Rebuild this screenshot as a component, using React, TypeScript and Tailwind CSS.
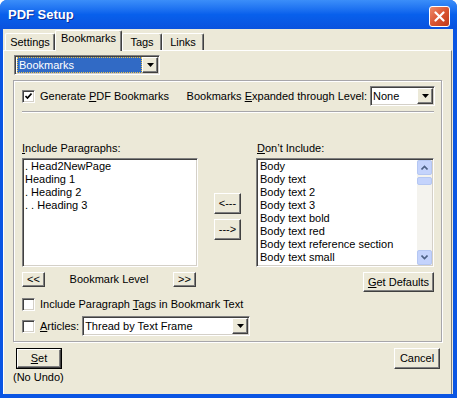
const raised =
  "bg-[#ECE9D8] border border-t-white border-l-white border-r-[#404040] border-b-[#404040] shadow-[inset_-1px_-1px_0_#808080]";
const sunken =
  "border border-t-[#808080] border-l-[#808080] border-r-white border-b-white shadow-[inset_1px_1px_0_#404040,inset_-1px_-1px_0_#D4D0C8]";

const Btn = ({ className = "", children }: { className?: string; children: React.ReactNode }) => (
  <div className={`${raised} flex items-center justify-center ${className}`}>{children}</div>
);

const U = ({ children }: { children: React.ReactNode }) => <span className="underline underline-offset-[1px]">{children}</span>;

const ArrowBtn = () => (
  <div className={`${raised} w-[16px] h-full flex items-center justify-center shrink-0`}>
    <svg width="7" height="4" viewBox="0 0 7 4">
      <path d="M0 0h7L3.5 4z" fill="#000" />
    </svg>
  </div>
);

const Combo = ({ text, className = "", selected = false }: { text: string; className?: string; selected?: boolean }) => (
  <div className={`${sunken} bg-white flex p-[1px] ${className}`}>
    <div className="flex-1 flex items-center pl-[1px] min-w-0">
      {selected ? (
        <div className="w-full h-[16px] bg-[#316AC5] text-white border border-dotted border-[#E8C34A] flex items-center pl-[1px]">
          {text}
        </div>
      ) : (
        <span>{text}</span>
      )}
    </div>
    <ArrowBtn />
  </div>
);

const Check = ({ checked = false }: { checked?: boolean }) => (
  <div className={`${sunken} bg-white w-[13px] h-[13px] shrink-0 flex items-center justify-center`}>
    {checked && (
      <svg width="7" height="7" viewBox="0 0 7 7">
        <path d="M0.5 3l2 2 4-4.5" stroke="#000" strokeWidth="1.6" fill="none" />
      </svg>
    )}
  </div>
);

const Tab = ({ label, selected = false, w }: { label: string; selected?: boolean; w: string }) => (
  <div
    className={`${w} flex justify-center bg-[#ECE9D8] border-t border-l border-t-white border-l-white border-r border-r-[#404040] rounded-t-[2px] shadow-[inset_-1px_0_0_#808080] ${
      selected ? "h-[21px] -mb-[1px] z-10 pt-[1px]" : "h-[17px] items-center"
    }`}
  >
    {label}
  </div>
);

const ScrollBtn = ({ up }: { up: boolean }) => (
  <div className="h-[15px] w-[15px] bg-[#C4D3FC] border border-[#B5C7F2] rounded-[2px] flex items-center justify-center">
    <svg width="7" height="5" viewBox="0 0 7 5">
      <path d={up ? "M0.5 4.5L3.5 1.5L6.5 4.5" : "M0.5 0.5L3.5 3.5L6.5 0.5"} stroke="#4D6185" strokeWidth="1.6" fill="none" />
    </svg>
  </div>
);

const include = [". Head2NewPage", "Heading 1", ". Heading 2", ". . Heading 3"];
const exclude = [
  "Body",
  "Body text",
  "Body text 2",
  "Body text 3",
  "Body text bold",
  "Body text red",
  "Body text reference section",
  "Body text small",
];

const App = () => {
  return (
    <div className="w-[457px] h-[398px] bg-white font-['Liberation_Sans',Arial,sans-serif] text-[11px] leading-[13px] text-black">
      <div className="w-full h-full rounded-t-[7px] overflow-hidden bg-[#0A55E3] flex flex-col">
        {/* title bar */}
        <div className="h-[29px] shrink-0 bg-linear-to-b from-[#3B8EF9] via-[#0860EC] to-[#0A52DE] flex items-center justify-between pl-[8px] pr-[7px]">
          <span className="text-white font-bold text-[13px] [text-shadow:1px_1px_#0C2D9A]">PDF Setup</span>
          <div className="w-[21px] h-[21px] mt-[3px] rounded-[3px] border border-white bg-linear-to-br from-[#EE8A6A] via-[#DA5532] to-[#C13A18] flex items-center justify-center">
            <svg width="11" height="11" viewBox="0 0 11 11">
              <path d="M1.5 1.5l8 8M9.5 1.5l-8 8" stroke="#fff" strokeWidth="2.2" strokeLinecap="round" />
            </svg>
          </div>
        </div>

        {/* body */}
        <div className="flex-1 ml-[3px] mr-[4px] mb-[4px] bg-[#ECE9D8] flex flex-col">
          <div className="h-[21px] flex items-end pl-[2px] shrink-0">
            <Tab label="Settings" w="w-[50px]" />
            <Tab label="Bookmarks" w="w-[67px]" selected />
            <Tab label="Tags" w="w-[40px]" />
            <Tab label="Links" w="w-[42px]" />
          </div>

          <div className="flex-1 mr-[1px] border-t border-l border-t-white border-l-white border-r border-r-[#808080] flex flex-col">
            <Combo text="Bookmarks" selected className="mt-[4px] ml-[10px] w-[146px] h-[20px]" />

            {/* group box */}
            <div className="mt-[5px] ml-[9px] w-[429px] h-[262px] border border-[#A7A6AA] shadow-[inset_1px_1px_0_#fff,1px_1px_0_#fff] flex flex-col">
              <div className="mt-[5px] h-[20px] pl-[8px] pr-[6px] flex items-center">
                <Check checked />
                <span className="ml-[5px]">
                  Generate <U>P</U>DF Bookmarks
                </span>
                <span className="ml-auto mr-[3px]">
                  Bookmarks <U>E</U>xpanded through Level:
                </span>
                <Combo text="None" className="w-[65px] h-[20px]" />
              </div>

              <div className="mt-[5px] ml-[8px] mr-[7px] h-[2px] border-t border-t-[#A7A6AA] border-b border-b-white" />

              <div className="mt-[29px] pl-[8px] flex">
                <div className="w-[176px] flex flex-col">
                  <span>
                    <U>I</U>nclude Paragraphs:
                  </span>
                  <div className={`${sunken} mt-[3px] h-[109px] bg-white px-[1px] pt-[1px]`}>
                    {include.map((t) => (
                      <div key={t} className="h-[13px] pl-[1px]">
                        {t}
                      </div>
                    ))}
                  </div>
                  <div className="mt-[5px] h-[15px] pr-[2px] flex items-center">
                    <Btn className="w-[23px] h-[15px]">&lt;&lt;</Btn>
                    <span className="flex-1 text-center">Bookmark Level</span>
                    <Btn className="w-[23px] h-[15px]">&gt;&gt;</Btn>
                  </div>
                </div>

                <div className="ml-[16px] w-[27px] pt-[51px] flex flex-col gap-[5px]">
                  <Btn className="h-[21px]">&lt;---</Btn>
                  <Btn className="h-[21px]">---&gt;</Btn>
                </div>

                <div className="ml-[15px] w-[178px] flex flex-col">
                  <span className="pl-[1px]">
                    <U>D</U>on’t Include:
                  </span>
                  <div className={`${sunken} mt-[3px] h-[109px] bg-white flex p-[1px]`}>
                    <div className="flex-1 pl-[2px]">
                      {exclude.map((t) => (
                        <div key={t} className="h-[13px]">
                          {t}
                        </div>
                      ))}
                    </div>
                    <div className="w-[15px] bg-[#F4F3EE] flex flex-col justify-between">
                      <div className="flex flex-col">
                        <ScrollBtn up />
                        <div className="mt-[2px] h-[8px] bg-[#C4D3FC] border border-[#B5C7F2] rounded-[2px]" />
                      </div>
                      <ScrollBtn up={false} />
                    </div>
                  </div>
                  <Btn className="mt-[5px] self-end w-[71px] h-[20px]">
                    <span>
                      <U>G</U>et Defaults
                    </span>
                  </Btn>
                </div>
              </div>

              <div className="mt-[6px] h-[13px] pl-[8px] flex items-center">
                <Check />
                <span className="ml-[5px]">
                  Include Paragraph <U>T</U>ags in Bookmark Text
                </span>
              </div>

              <div className="mt-[5px] h-[20px] pl-[8px] flex items-center">
                <Check />
                <span className="ml-[5px]">
                  <U>A</U>rticles:
                </span>
                <Combo text="Thread by Text Frame" className="ml-[3px] w-[168px] h-[20px]" />
              </div>
            </div>

            {/* bottom buttons */}
            <div className="mt-[6px] pl-[12px] pr-[11px] flex justify-between items-start">
              <div className="flex flex-col">
                <div className="w-[46px] h-[21px] border border-black">
                  <Btn className="w-full h-full">
                    <span>
                      <U>S</U>et
                    </span>
                  </Btn>
                </div>
                <span className="-ml-[3px] mt-[2px]">(No Undo)</span>
              </div>
              <Btn className="w-[46px] h-[21px]">Cancel</Btn>
            </div>
          </div>
        </div>
      </div>
    </div>
  );
};

export default App;
